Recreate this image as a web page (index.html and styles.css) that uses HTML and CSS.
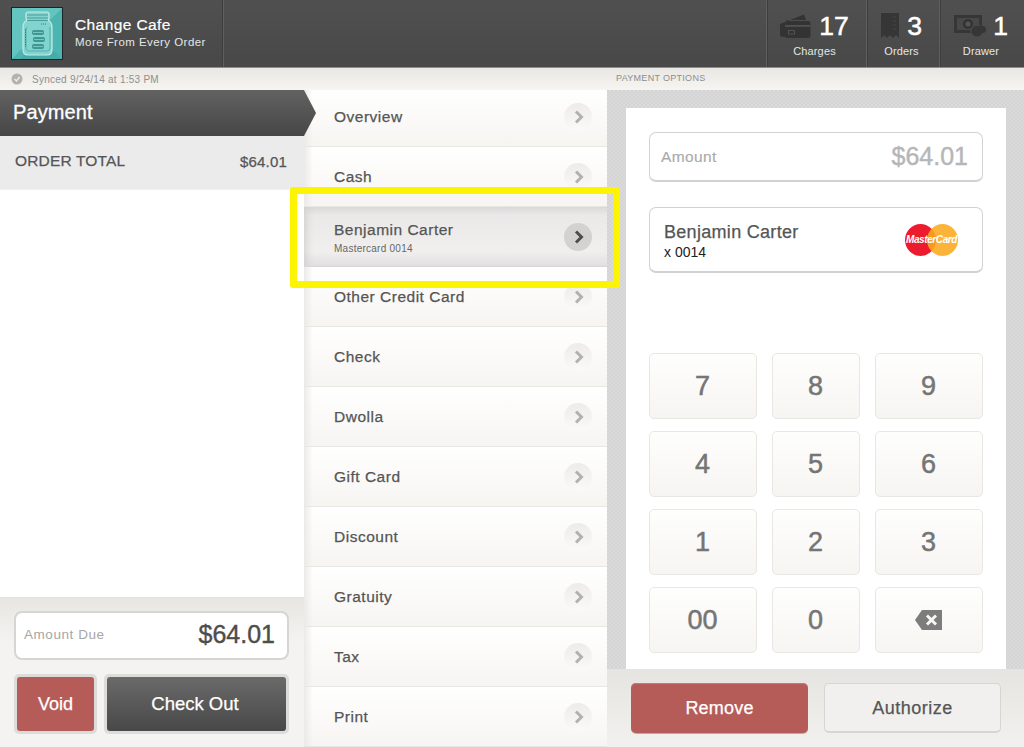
FILE: index.html
```html
<!DOCTYPE html>
<html lang="en">
<head>
<meta charset="utf-8">
<title>Change Cafe Payment</title>
<link rel="stylesheet" href="styles.css">
</head>
<body>
<svg class="defs" width="0" height="0" aria-hidden="true">
  <symbol id="chev" viewBox="0 0 12 14"><path d="M3 1.500 8.500 7 3 12.500" fill="none" stroke="currentColor" stroke-width="3"/></symbol>
</svg>
<header class="topbar">
  <div class="brand">
    <svg class="logo" viewBox="0 0 52 53">
      <rect width="52" height="53" fill="#4cb5b1"/>
      <path d="M0 0h52L0 53z" fill="#64c4c0"/>
      <path d="M8 53 30 31l22 22z" fill="#45aca9"/>
      <path d="M17 5h19c1 0 2 1 2 2v4c0 1-1 2-1 2 3 2 4 4 4 7v23c0 3-2 5-5 5H17c-3 0-5-2-5-5V20c0-3 1-5 4-7 0 0-1-1-1-2V7c0-1 1-2 2-2z" fill="#82d4cf" stroke="#c3ebe7" stroke-width="1.200"/>
      <path d="M16 8h21M16 11h21M16 13.500h21" stroke="#3b8f8e" stroke-width=".8"/>
      <path d="M16 20c-1 2-1 3-1 6v14c0 3 1 4 3 4h17c3 0 4-1 4-4V20" fill="none" stroke="#4aa5a3" stroke-width=".8"/>
      <path d="M14.500 22v18" stroke="#2f7f7f" stroke-width="1" stroke-dasharray="1.500 1"/>
      <path d="M30 17h6" stroke="#2f7f7f" stroke-dasharray="1 1"/>
      <g fill="#3e9695"><rect x="21" y="23" width="12" height="5" rx="2"/><rect x="22" y="30" width="12" height="5" rx="2"/><rect x="21" y="37" width="12" height="5" rx="2"/></g>
      <g stroke="#8fdad5" stroke-width=".7"><path d="M22 25.500h10M23 32.500h10M22 39.500h10"/></g>
      <rect x="0.500" y="0.500" width="51" height="52" fill="none" stroke="#222"/>
    </svg>
    <div class="brand-text">
      <div class="brand-name">Change Cafe</div>
      <div class="brand-sub">More From Every Order</div>
    </div>
  </div>
  <div class="stats">
    <div class="stat stat-charges">
      <div class="stat-row">
        <svg class="ic-card" viewBox="0 0 31 25"><path d="M0 10 24 .5l2 5.500H9c-3 0-4 2-4 4v13l-2 0C1 23 0 22 0 20z" fill="#333"/><rect x="5" y="7" width="25.500" height="17" rx="2.500" fill="#333"/><rect x="5" y="11" width="25.500" height="1.800" fill="#525252"/><rect x="8.500" y="16.500" width="6" height="3.500" fill="none" stroke="#525252"/></svg>
        <span class="num">17</span>
      </div>
      <div class="stat-label">Charges</div>
    </div>
    <div class="stat stat-orders">
      <div class="stat-row">
        <svg class="ic-receipt" viewBox="0 0 18 26"><path d="M0 0h18v25l-3-3-3 3-3-3-3 3-3-3-3 3z" fill="#363636"/><path d="M12 4h3M12 8h3M12 12h3M12 16h3" stroke="#454545"/></svg>
        <span class="num">3</span>
      </div>
      <div class="stat-label">Orders</div>
    </div>
    <div class="stat stat-drawer">
      <div class="stat-row">
        <svg class="ic-cash" viewBox="0 0 32 24"><rect y="1" width="28" height="18" fill="#363636"/><rect x="3" y="4" width="22" height="12" fill="#484848"/><circle cx="14" cy="10" r="5" fill="#333"/><circle cx="14" cy="10" r="2.500" fill="#565656"/><circle cx="23" cy="17" r="6" fill="#363636" stroke="#4c4c4c"/><circle cx="28.500" cy="15.500" r="3.500" fill="#363636"/></svg>
        <span class="num">1</span>
      </div>
      <div class="stat-label">Drawer</div>
    </div>
  </div>
</header>

<main class="panes">
  <section class="left">
    <div class="sync">
      <svg class="sync-ic" viewBox="0 0 12 12"><circle cx="6" cy="6" r="5.500" fill="#b4b2ae"/><path d="M3.500 6 5.500 8 8.500 4" fill="none" stroke="#eee" stroke-width="1.400"/></svg>
      <span>Synced 9/24/14 at 1:53 PM</span>
    </div>
    <div class="pay-head">Payment</div>
    <div class="total"><span>ORDER TOTAL</span><span class="total-val">$64.01</span></div>
    <div class="left-space"></div>
    <div class="left-foot">
      <div class="due"><span class="due-label">Amount Due</span><span class="due-val">$64.01</span></div>
      <div class="left-btns">
        <div class="frame frame-void"><button class="btn-void">Void</button></div>
        <div class="frame frame-check"><button class="btn-check">Check Out</button></div>
      </div>
    </div>
  </section>

  <section class="mid">
    <div class="strip"></div>
    <ul class="menu">
      <li class="item item-first"><span class="item-name">Overview</span><span class="chev"><svg><use href="#chev"/></svg></span></li>
      <li class="item"><span class="item-name">Cash</span><span class="chev"><svg><use href="#chev"/></svg></span></li>
      <li class="item item-sel"><span class="item-stack"><span class="item-name">Benjamin Carter</span><span class="item-sub">Mastercard 0014</span></span><span class="chev"><svg><use href="#chev"/></svg></span></li>
      <li class="item"><span class="item-name">Other Credit Card</span><span class="chev"><svg><use href="#chev"/></svg></span></li>
      <li class="item"><span class="item-name">Check</span><span class="chev"><svg><use href="#chev"/></svg></span></li>
      <li class="item"><span class="item-name">Dwolla</span><span class="chev"><svg><use href="#chev"/></svg></span></li>
      <li class="item"><span class="item-name">Gift Card</span><span class="chev"><svg><use href="#chev"/></svg></span></li>
      <li class="item"><span class="item-name">Discount</span><span class="chev"><svg><use href="#chev"/></svg></span></li>
      <li class="item"><span class="item-name">Gratuity</span><span class="chev"><svg><use href="#chev"/></svg></span></li>
      <li class="item"><span class="item-name">Tax</span><span class="chev"><svg><use href="#chev"/></svg></span></li>
      <li class="item"><span class="item-name">Print</span><span class="chev"><svg><use href="#chev"/></svg></span></li>
    </ul>
  </section>

  <section class="right">
    <div class="strip strip-title">PAYMENT OPTIONS</div>
    <div class="pattern">
      <div class="card">
        <div class="amount"><span class="amount-label">Amount</span><span class="amount-val">$64.01</span></div>
        <div class="method">
          <div>
            <div class="method-name">Benjamin Carter</div>
            <div class="method-sub">x 0014</div>
          </div>
          <div class="mc">
            <span class="mc-red"></span><span class="mc-amber"></span>
            <span class="mc-text">MasterCard</span>
          </div>
        </div>
        <div class="keys">
          <div class="key">7</div><div class="key">8</div><div class="key">9</div>
          <div class="key">4</div><div class="key">5</div><div class="key">6</div>
          <div class="key">1</div><div class="key">2</div><div class="key">3</div>
          <div class="key">00</div><div class="key">0</div>
          <div class="key"><svg class="ic-back" viewBox="0 0 27 20"><path d="M7 0h20v20H7L0 10z" fill="#7d7d7d"/><path d="M12 5.500l9 9m0-9-9 9" stroke="#f8f7f5" stroke-width="3"/></svg></div>
        </div>
      </div>
    </div>
    <div class="right-foot">
      <button class="btn-remove">Remove</button>
      <button class="btn-auth">Authorize</button>
    </div>
  </section>
</main>
<div class="highlight"></div>
</body>
</html>
```
FILE: styles.css
```css
* { box-sizing: border-box; }
html, body { margin: 0; padding: 0; }
body {
  position: relative;
  width: 1024px;
  height: 747px;
  overflow: hidden;
  font-family: "Liberation Sans", Arial, sans-serif;
  color: #555;
  background: #fff;
}
.defs { position: absolute; }
button { font-family: inherit; border: 0; padding: 0; margin: 0; }

.topbar {
  height: 68px;
  display: flex;
  justify-content: space-between;
  background: linear-gradient(#505050, #484848);
  border-bottom: 1px solid #8d8d8b;
}
.brand {
  width: 224px;
  display: flex;
  align-items: flex-start;
  padding: 7px 0 0 11px;
  border-right: 1px solid #5f5f5f;
  box-shadow: inset -1px 0 0 #3e3e3e;
}
.logo { width: 52px; height: 53px; display: block; flex: none; }
.brand-text { margin-left: 12px; padding-top: 9px; color: #fff; }
.brand-name { font-size: 15.500px; line-height: 18px; letter-spacing: 0.4px; -webkit-text-stroke: 0.2px #fff; }
.brand-sub { font-size: 11.500px; line-height: 15px; color: #e6e6e6; letter-spacing: 0.45px; margin-top: 1px; }

.stats { display: flex; }
.stat {
  display: flex;
  flex-direction: column;
  align-items: center;
  border-left: 1px solid #5f5f5f;
  box-shadow: inset 1px 0 0 #3e3e3e;
  padding-top: 12px;
  color: #fff;
}
.stat-charges { width: 100px; padding-right: 4px; }
.stat-orders { width: 73px; padding-right: 3px; }
.stat-drawer { width: 85px; padding-right: 2px; }
.stat-row { height: 28px; display: flex; align-items: center; gap: 8px; }
.num { font-size: 26.500px; line-height: 28px; -webkit-text-stroke: 0.5px #fff; }
.ic-card { width: 31px; height: 25px; }
.ic-receipt { width: 18px; height: 26px; }
.ic-cash { width: 32px; height: 24px; margin-right: -1px; }
.stat-label { font-size: 11px; line-height: 13px; margin-top: 5px; color: #e6e6e6; letter-spacing: 0.15px; }

.panes {
  display: grid;
  grid-template-columns: 304px 303px 417px;
  height: 679px;
}
.left {
  display: flex;
  flex-direction: column;
  background: #fff;
  position: relative;
}
.sync {
  height: 22px;
  display: flex;
  align-items: center;
  gap: 9px;
  padding-left: 11px;
  font-size: 10px;
  color: #8f8f8d;
  letter-spacing: 0.25px;
  background: linear-gradient(#e9e7e3, #f6f5f2);
}
.sync-ic { width: 12px; height: 12px; }
.pay-head {
  height: 46px;
  width: 316px;
  position: relative;
  z-index: 2;
  padding-left: 13px;
  line-height: 45px;
  font-size: 20px;
  letter-spacing: 0.1px;
  -webkit-text-stroke: 0.3px #fff;
  color: #fff;
  background: linear-gradient(#626262, #464646);
  clip-path: polygon(0 0, 304px 0, 316px 50%, 304px 100%, 0 100%);
}
.total {
  height: 54px;
  display: flex;
  justify-content: space-between;
  align-items: center;
  padding: 0 17px 3px 15px;
  font-size: 15.500px;
  letter-spacing: 0.15px;
  -webkit-text-stroke: 0.25px #555;
  background: #ebebeb;
  border-bottom: 1px solid #f0f0ee;
}
.total-val { font-size: 15px; letter-spacing: 0.2px; }
.left-space { flex: 1; }
.left-foot {
  height: 150px;
  padding: 13px 15px 0 14px;
  background: linear-gradient(#e8e6e2, #f4f3f1 30%, #f4f3f1);
  border-top: 1px solid #e0dfdc;
}
.due {
  height: 49px;
  display: flex;
  justify-content: space-between;
  align-items: center;
  padding: 0 12px 3px 8px;
  background: #fff;
  border: 2px solid #d5d5d3;
  border-radius: 8px;
}
.due-label { font-size: 13.500px; color: #a6a6a6; letter-spacing: 0.55px; padding-top: 1px; }
.due-val { font-size: 25px; color: #4d4d4d; -webkit-text-stroke: 0.4px #4d4d4d; }
.left-btns { display: flex; gap: 7px; margin-top: 14px; }
.frame { height: 60px; padding: 3px; border-radius: 5px; background: #dcdcda; }
.frame-void { width: 83px; }
.frame-check { width: 185px; }
.frame button { width: 100%; height: 100%; border-radius: 3px; color: #fff; -webkit-text-stroke: 0.25px #fff; }
.btn-void { background: #b65c58; font-size: 18px; }
.frame .btn-check { background: linear-gradient(#6a6a6a, #484848); font-size: 18.500px; padding-right: 3px; }

.mid { display: flex; flex-direction: column; position: relative; }
.strip {
  height: 22px;
  flex: none;
  background: linear-gradient(#e9e7e3, #f6f5f2);
}
.strip-title { font-size: 9px; line-height: 21px; color: #8d8d8b; padding-left: 9px; letter-spacing: 0.3px; }
.menu { list-style: none; margin: 0; padding: 0; }
.item {
  height: 60px;
  display: flex;
  align-items: center;
  justify-content: space-between;
  padding: 0 15px 0 30px;
  background: linear-gradient(90deg, #ebeae8 0, rgba(255, 255, 255, 0) 9px), linear-gradient(#fff, #f7f5f2);
  border-bottom: 1px solid #e9e7e4;
}
.item-first { height: 57px; }
.item-first .chev { margin-top: -3px; }
.item-name { font-size: 15.500px; color: #555; letter-spacing: 0.5px; -webkit-text-stroke: 0.25px #555; }
.item-first .item-name { margin-top: -3px; }
.item-stack { display: flex; flex-direction: column; margin-top: 2px; }
.item-sub { font-size: 10px; line-height: 12px; color: #666; letter-spacing: 0.25px; margin-top: 4px; }
.item-sel {
  background: linear-gradient(#dbd9d8, #eae8e8 14%, #f0efee 75%, #e2e0e0);
  border-bottom: 1px solid #d8d6d6;
  box-shadow: inset 8px 0 8px -6px #cfcdcd;
}
.chev {
  width: 28px;
  height: 28px;
  border-radius: 50%;
  background: linear-gradient(#eeecea, #fbfaf9);
  color: #b1b1af;
  display: flex;
  align-items: center;
  justify-content: center;
  padding-left: 1px;
}
.chev svg { width: 12px; height: 14px; display: block; }
.item-sel .chev { background: #d4d2d1; color: #4d4d4d; }

.right { display: flex; flex-direction: column; }
.pattern {
  flex: 1;
  padding: 18px 18px 0 19px;
  background-color: #d5d4d4;
  background-image: linear-gradient(45deg, #dbdada 25%, transparent 25%, transparent 75%, #dbdada 75%), linear-gradient(45deg, #dbdada 25%, transparent 25%, transparent 75%, #dbdada 75%);
  background-size: 4px 4px;
  background-position: 0 0, 2px 2px;
  display: flex;
}
.card { width: 380px; background: #fff; padding: 24px 23px 0; }
.amount {
  height: 50px;
  display: flex;
  justify-content: space-between;
  align-items: center;
  padding: 0 14px 0 11px;
  border: 1px solid #d2d2d0;
  border-bottom-width: 2px;
  border-radius: 7px;
}
.amount-label { font-size: 15.500px; color: #a9a9a9; letter-spacing: 0.4px; -webkit-text-stroke: 0.15px #a9a9a9; }
.amount-val { font-size: 25px; color: #b6b6b6; -webkit-text-stroke: 0.4px #b6b6b6; }
.method {
  height: 66px;
  margin-top: 25px;
  display: flex;
  justify-content: space-between;
  align-items: center;
  padding: 4px 24px 0 14px;
  border: 1px solid #d2d2d0;
  border-bottom-width: 2px;
  border-radius: 7px;
}
.method-name { font-size: 18px; line-height: 20px; color: #555; letter-spacing: 0.3px; -webkit-text-stroke: 0.25px #555; margin-top: -1px; }
.method-sub { font-size: 14px; line-height: 18px; color: #222; margin-top: 1px; }
.mc { position: relative; width: 53px; height: 32px; margin-top: -4px; }
.mc-red, .mc-amber { position: absolute; top: 0; width: 31px; height: 32px; border-radius: 50%; }
.mc-red { left: 0; background: #ec1c2e; }
.mc-amber { right: 0; background: rgba(250, 170, 30, 0.88); }
.mc-text {
  position: absolute;
  left: 0;
  top: 10px;
  width: 53px;
  text-align: center;
  font-size: 10px;
  line-height: 12px;
  font-weight: 700;
  font-style: italic;
  letter-spacing: -0.4px;
  color: #fff;
}
.keys {
  display: grid;
  grid-template-columns: 108px 88px 108px;
  grid-auto-rows: 66px;
  column-gap: 15px;
  row-gap: 12px;
  margin-top: 80px;
}
.key {
  display: flex;
  align-items: center;
  justify-content: center;
  padding-right: 1px;
  font-size: 27px;
  color: #757575;
  -webkit-text-stroke: 0.5px #757575;
  border: 1px solid #e9e7e4;
  border-radius: 5px;
  background: linear-gradient(#fefefd, #f7f5f2);
}
.ic-back { width: 27px; height: 20px; }
.right-foot {
  height: 78px;
  flex: none;
  display: flex;
  gap: 16px;
  padding: 14px 0 0 24px;
  background: linear-gradient(#e6e4e0, #f2f1ef);
}
.right-foot button { width: 177px; height: 50px; border-radius: 5px; font-size: 18px; padding-top: 1px; letter-spacing: 0.2px; }
.btn-remove { background: #b65c58; color: #fff; -webkit-text-stroke: 0.25px #fff; box-shadow: inset 0 1px 0 #c67a76, 0 1px 0 #c9a5a2; }
.right-foot .btn-auth { background: #f1f0ee; color: #555; -webkit-text-stroke: 0.25px #555; border: 1px solid #d6d5d2; border-bottom-width: 2px; letter-spacing: 0.5px; }

.highlight {
  position: absolute;
  left: 290px;
  top: 187px;
  width: 330px;
  height: 101px;
  border: 7px solid #fcf400;
  border-radius: 3px;
}
```
